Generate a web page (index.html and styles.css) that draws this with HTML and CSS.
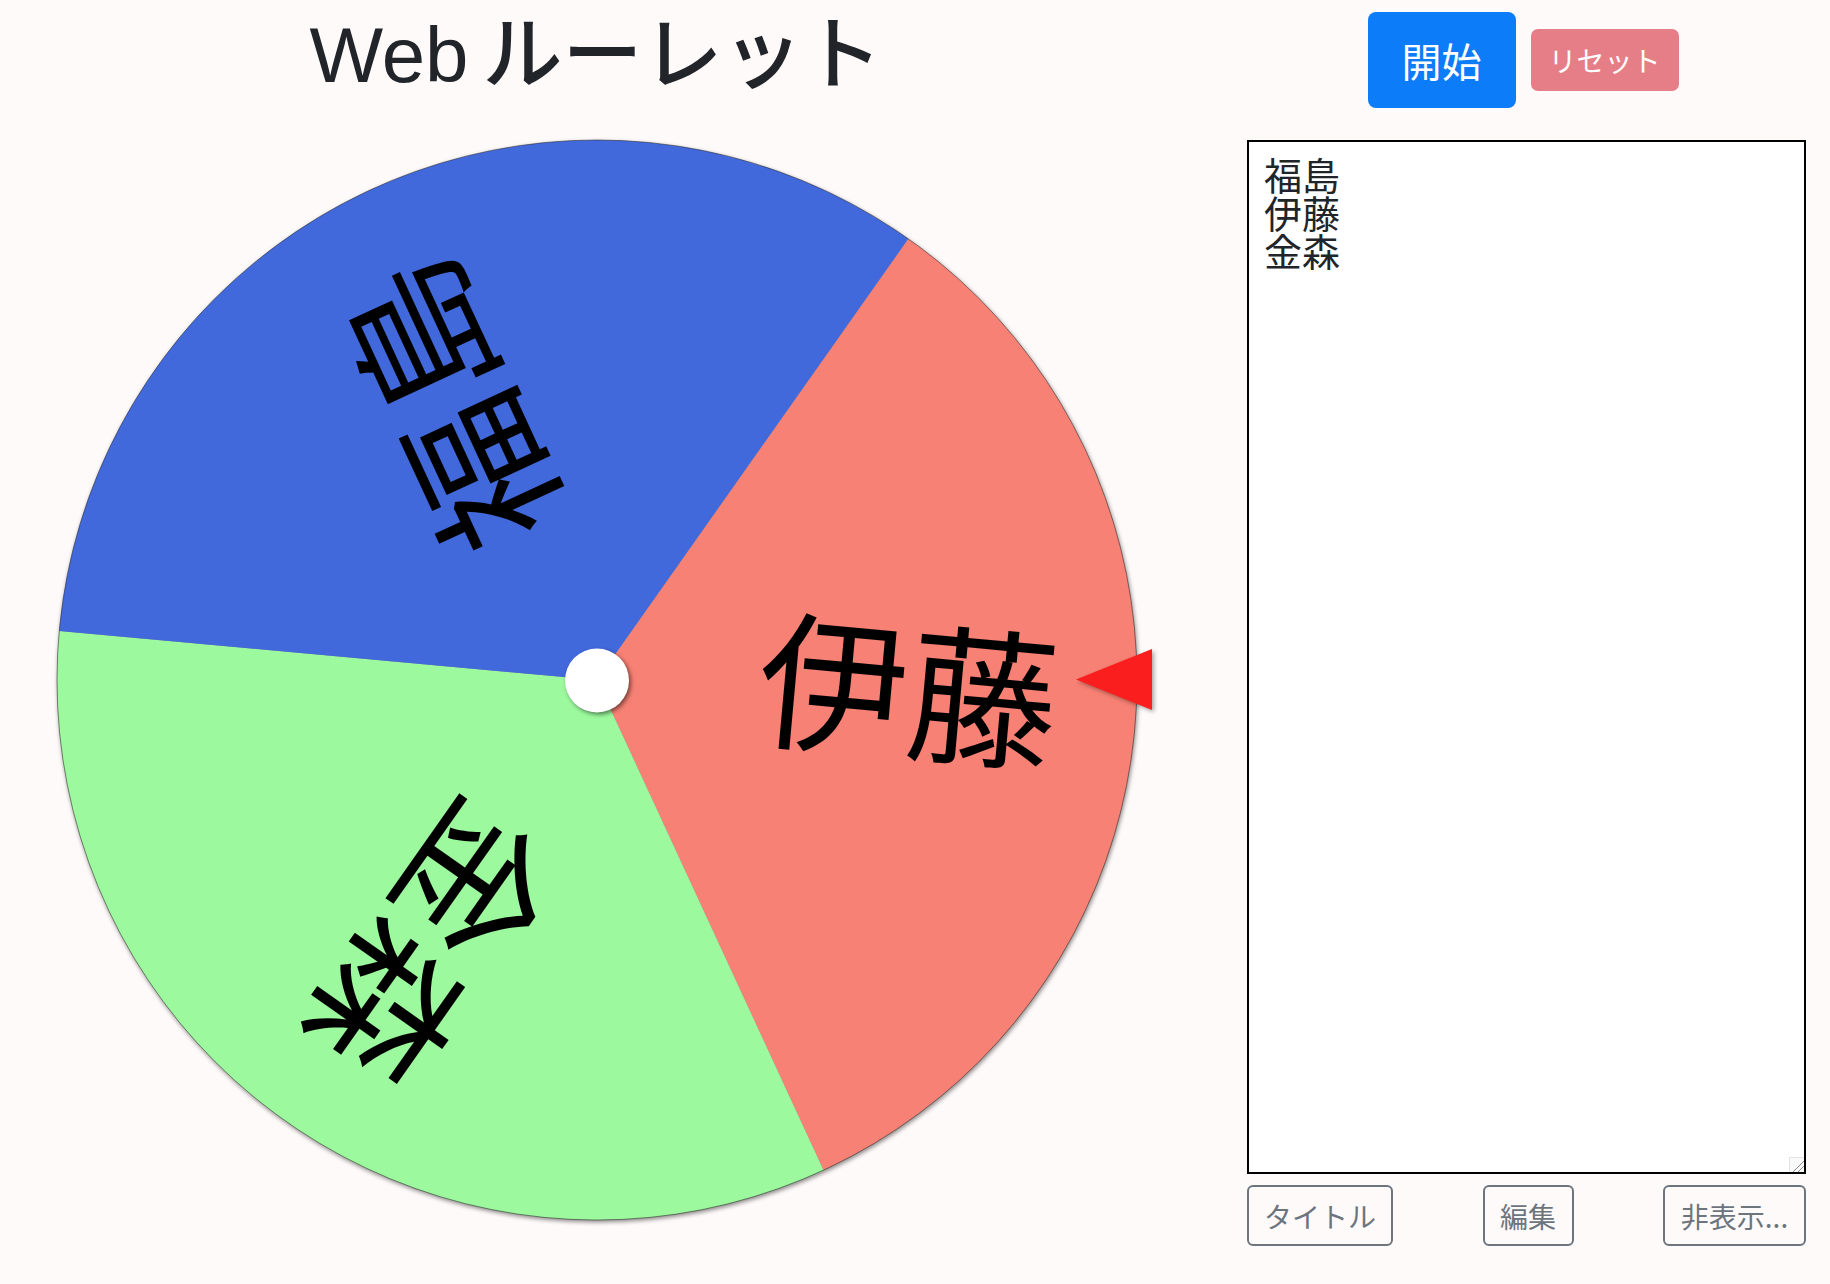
FILE: index.html
```html
<!DOCTYPE html>
<html lang="ja">
<head>
<meta charset="utf-8">
<title>Web ルーレット</title>
<link rel="stylesheet" href="styles.css">
</head>
<body>
<div class="app">
  <section class="stage">
    <h1 class="title">
      <span class="title-lat">Web</span>
      <span class="title-jp">ルーレット</span>
    </h1>
    <div class="wheel-wrap">
      <svg class="wheel" viewBox="-540 -540 1080 1080" width="1080" height="1080">
        <g class="disc">
          <path class="seg seg-salmon" d="M0 0 L311.3 -441.2 A540 540 0 0 1 226.5 490.2 Z"/>
          <path class="seg seg-green" d="M0 0 L226.5 490.2 A540 540 0 0 1 -537.8 -48.9 Z"/>
          <path class="seg seg-blue" d="M0 0 L-537.8 -48.9 A540 540 0 0 1 311.3 -441.2 Z"/>
          <circle class="rim" cx="0" cy="0" r="540"/>
        </g>
        <text class="label" transform="rotate(5.2)" x="311" y="40">伊藤</text>
        <text class="label" transform="rotate(125.2)" x="311" y="40">金森</text>
        <text class="label" transform="rotate(245.2)" x="311" y="40">福島</text>
        <circle class="hub" cx="0" cy="0.5" r="32"/>
      </svg>
      <svg class="pointer" viewBox="0 0 80 66" width="80" height="66">
        <polygon points="0,30.5 76,0 76,61"/>
      </svg>
    </div>
  </section>
  <aside class="panel">
    <div class="actions">
      <button class="btn btn-start" type="button">開始</button>
      <button class="btn btn-reset" type="button" disabled>リセット</button>
    </div>
    <textarea class="names" spellcheck="false">福島
伊藤
金森</textarea>
    <div class="tools">
      <button class="btn btn-tool btn-title" type="button">タイトル</button>
      <button class="btn btn-tool btn-edit" type="button">編集</button>
      <button class="btn btn-tool btn-hide" type="button">非表示...</button>
    </div>
  </aside>
</div>
</body>
</html>
```
FILE: styles.css
```css
* { box-sizing: border-box; }

html, body {
  margin: 0;
  padding: 0;
  background: #fffafa;
  color: #212529;
  font-family: "Noto Sans CJK JP", "Noto Sans", sans-serif;
}

.app {
  display: flex;
  align-items: flex-start;
  width: 1830px;
  height: 1284px;
}

.stage {
  flex: none;
  width: 1247px;
  display: flex;
  flex-direction: column;
}

/* title */
.title {
  margin: 0;
  width: 1192px;
  height: 120px;
  padding-top: 1px;
  display: flex;
  justify-content: center;
  align-items: baseline;
  gap: 14px;
  font-weight: 500;
  color: #212529;
  white-space: nowrap;
}

.title-lat {
  font-family: "Liberation Sans", Arial, sans-serif;
  font-size: 78px;
  line-height: 92px;
}

.title-jp {
  font-family: "Noto Sans CJK JP", sans-serif;
  font-size: 80px;
  line-height: 92px;
}

/* wheel */
.wheel-wrap {
  position: relative;
  width: 1080px;
  height: 1080px;
  margin: 20px 0 0 57px;
}

.wheel {
  display: block;
  width: 1080px;
  height: 1080px;
  overflow: visible;
}

.disc {
  filter: drop-shadow(1px 2px 2px rgba(0, 0, 0, 0.45));
}

.seg-salmon { fill: #f78174; }
.seg-green { fill: #9cf99d; }
.seg-blue { fill: #4169dc; }

.rim {
  fill: none;
  stroke: rgba(40, 40, 40, 0.55);
  stroke-width: 1;
}

.label {
  font-family: "Noto Sans CJK JP", sans-serif;
  font-size: 150px;
  fill: #000;
  text-anchor: middle;
}

.hub {
  fill: #fff;
  filter: drop-shadow(2px 2px 2px rgba(0, 0, 0, 0.5));
}

.pointer {
  position: absolute;
  left: 1019px;
  top: 509px;
  overflow: visible;
  filter: drop-shadow(2px 2px 2px rgba(0, 0, 0, 0.35));
}

.pointer polygon { fill: #fa1e1e; }

/* right panel */
.panel {
  flex: none;
  width: 559px;
  display: flex;
  flex-direction: column;
}

.actions {
  display: flex;
  justify-content: center;
  align-items: center;
  gap: 15px;
  padding: 12px 7px 0 0;
  height: 108px;
}

.btn {
  margin: 0;
  border: 0;
  padding: 0;
  font-family: "Noto Sans CJK JP", sans-serif;
  display: flex;
  align-items: center;
  justify-content: center;
  white-space: nowrap;
  cursor: pointer;
}

.btn-start {
  width: 148px;
  height: 96px;
  border-radius: 8px;
  background: #0d7cf8;
  color: #fff;
  font-size: 40px;
  line-height: 1;
}

.btn-reset {
  width: 148px;
  height: 62px;
  border-radius: 7px;
  background: #e57e86;
  color: #fff;
  font-size: 28px;
  line-height: 1;
  cursor: default;
}

.names {
  display: block;
  margin: 32px 0 0;
  width: 559px;
  height: 1034px;
  border: 2px solid #000;
  border-radius: 0;
  background: #fff;
  color: #212529;
  padding: 13px 15px;
  font-family: "Noto Sans CJK JP", sans-serif;
  font-size: 38px;
  line-height: 38px;
  resize: vertical;
  overflow-y: scroll;
  outline: none;
}

.names::-webkit-scrollbar {
  width: 28px;
}

.names::-webkit-scrollbar-track {
  background: #fafafa;
  border-left: 1px solid #e4e4e4;
}

.names::-webkit-resizer {
  background:
    linear-gradient(135deg, transparent 0 58%, #8a8a8a 58% 62%, transparent 62% 76%, #8a8a8a 76% 80%, transparent 80%),
    #fafafa;
  border-top: 1px solid #e4e4e4;
  border-left: 1px solid #e4e4e4;
}

.tools {
  display: flex;
  justify-content: space-between;
  margin-top: 11px;
}

.btn-tool {
  height: 61px;
  border: 2px solid #6c757d;
  border-radius: 6px;
  background: transparent;
  color: #6c757d;
  font-size: 28px;
  line-height: 1;
}

.btn-title { width: 146px; }
.btn-edit { width: 91px; }
.btn-hide { width: 143px; }
```
